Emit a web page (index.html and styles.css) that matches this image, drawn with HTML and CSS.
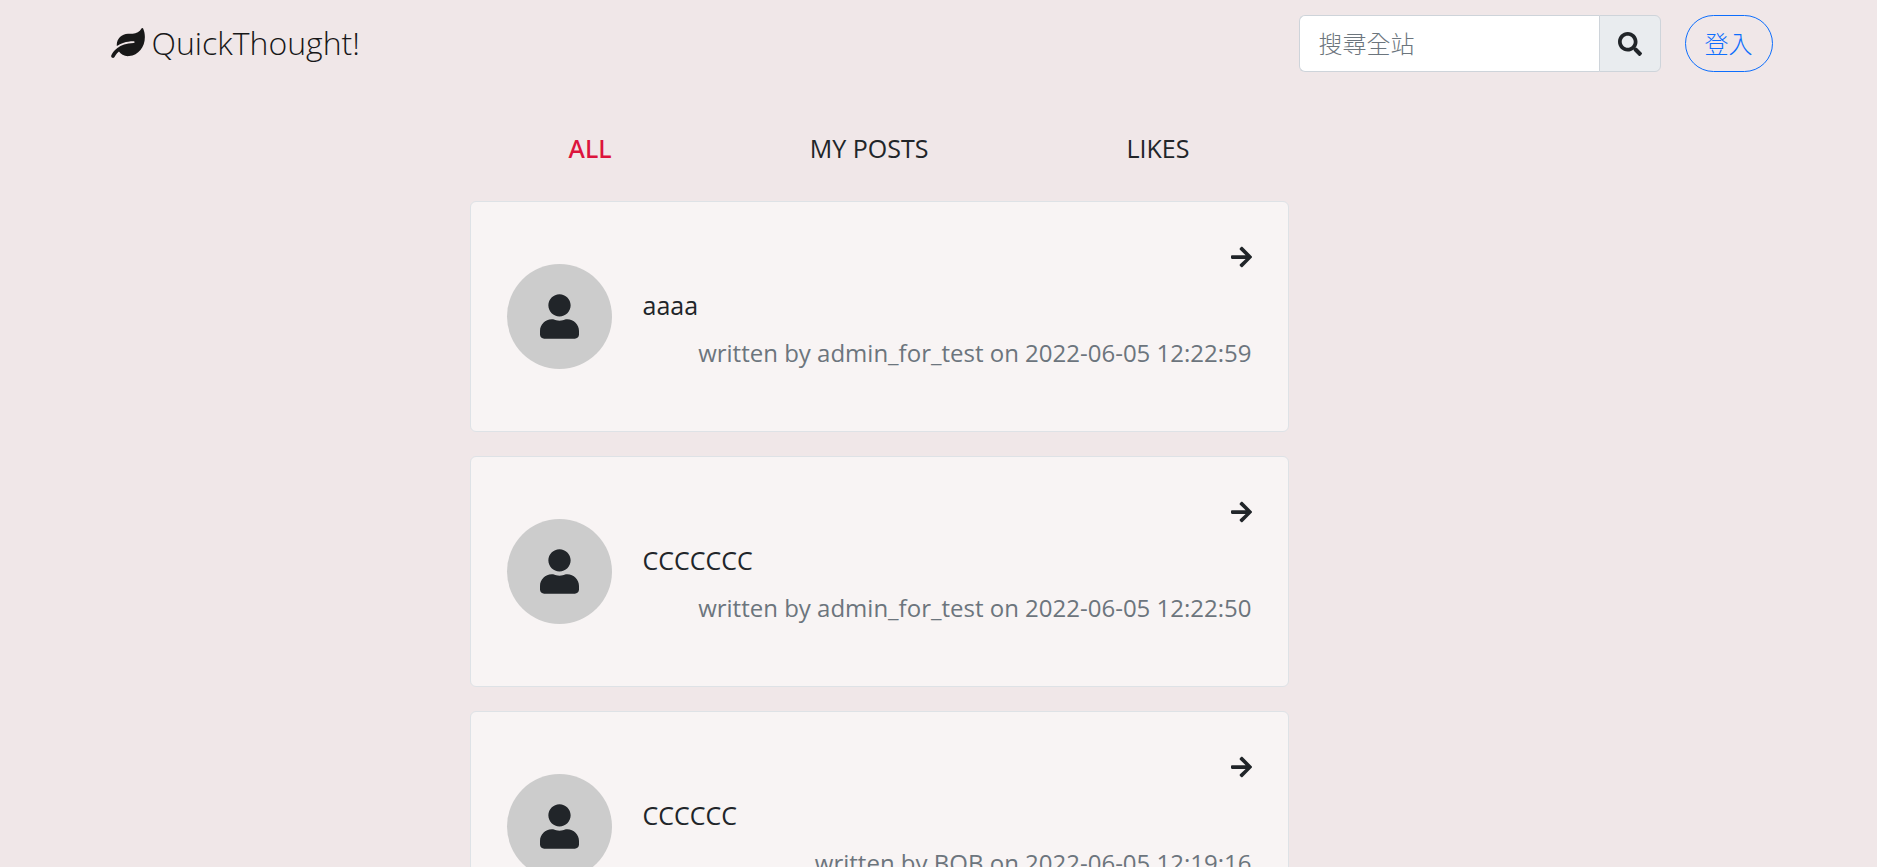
FILE: index.html
```html
<!DOCTYPE html>
<html lang="zh-Hant">
<head>
<meta charset="utf-8">
<meta name="viewport" content="width=device-width, initial-scale=1">
<title>QuickThought!</title>
<link rel="stylesheet" href="styles.css">
</head>
<body>
<svg class="sprite" aria-hidden="true">
  <symbol id="leaf" viewBox="0 0 576 512"><path d="M546.2 9.7c-5.6-12.5-21.6-13-28.3-1.2C486.9 62.4 431.4 96 368 96h-80C182 96 96 182 96 288c0 7 .8 13.7 1.5 20.5C161.3 262.8 253.4 224 384 224c8.8 0 16 7.2 16 16s-7.2 16-16 16C132.6 256 26 410.1 2.4 468c-6.6 16.3 1.2 34.9 17.5 41.6 16.4 6.8 35-1.1 41.8-17.3 1.5-3.6 20.9-47.9 71.9-90.6 32.4 43.9 94 85.8 174.9 77.2C465.5 467.5 576 326.7 576 154.3c0-50.2-10.8-102.2-29.8-144.6z"/></symbol>
  <symbol id="search" viewBox="0 0 512 512"><path d="M505 442.7L405.3 343c-4.5-4.5-10.6-7-17-7H372c27.6-35.3 44-79.7 44-128C416 93.1 322.9 0 208 0S0 93.1 0 208s93.1 208 208 208c48.3 0 92.7-16.4 128-44v16.3c0 6.4 2.5 12.5 7 17l99.7 99.7c9.4 9.4 24.6 9.4 33.9 0l28.3-28.3c9.4-9.4 9.4-24.6.1-34zM208 336c-70.7 0-128-57.2-128-128 0-70.7 57.2-128 128-128 70.7 0 128 57.2 128 128 0 70.7-57.2 128-128 128z"/></symbol>
  <symbol id="user" viewBox="0 0 448 512"><path d="M224 256c70.7 0 128-57.3 128-128S294.7 0 224 0 96 57.3 96 128s57.3 128 128 128zm89.6 32h-16.7c-22.2 10.2-46.9 16-72.9 16s-50.6-5.8-72.9-16h-16.7C60.2 288 0 348.2 0 422.4V464c0 26.5 21.5 48 48 48h352c26.5 0 48-21.5 48-48v-41.6c0-74.2-60.2-134.4-134.4-134.4z"/></symbol>
  <symbol id="arrow" viewBox="0 0 448 512"><path d="M190.5 66.9l22.2-22.2c9.4-9.4 24.6-9.4 33.9 0L441 239c9.4 9.4 9.4 24.6 0 33.9L246.6 467.3c-9.4 9.4-24.6 9.4-33.9 0l-22.2-22.2c-9.5-9.5-9.3-25 .4-34.3L311.4 296H24c-13.3 0-24-10.7-24-24v-32c0-13.3 10.7-24 24-24h287.4L190.9 101.2c-9.8-9.3-10-24.8-.4-34.3z"/></symbol>
</svg>

<header class="navbar">
  <a class="brand" href="#"><svg class="brand-icon" aria-hidden="true"><use href="#leaf"/></svg>QuickThought!</a>
  <div class="nav-actions">
    <form class="search" role="search">
      <input class="search-input" type="search" placeholder="搜尋全站" aria-label="搜尋全站">
      <button class="search-button" type="button" aria-label="搜尋"><svg class="search-icon" aria-hidden="true"><use href="#search"/></svg></button>
    </form>
    <a class="login" href="#">登入</a>
  </div>
</header>

<main class="page">
  <div class="feed">
    <nav class="tabs">
      <a class="tab tab-active" href="#">ALL</a>
      <a class="tab" href="#">MY POSTS</a>
      <a class="tab" href="#">LIKES</a>
    </nav>

    <article class="card">
      <div class="avatar"><svg class="avatar-icon" aria-hidden="true"><use href="#user"/></svg></div>
      <div class="post">
        <a class="open" href="#" aria-label="Open post"><svg class="open-icon" aria-hidden="true"><use href="#arrow"/></svg></a>
        <p class="text">aaaa</p>
        <p class="meta">written by admin_for_test on 2022-06-05 12:22:59</p>
      </div>
    </article>

    <article class="card">
      <div class="avatar"><svg class="avatar-icon" aria-hidden="true"><use href="#user"/></svg></div>
      <div class="post">
        <a class="open" href="#" aria-label="Open post"><svg class="open-icon" aria-hidden="true"><use href="#arrow"/></svg></a>
        <p class="text">CCCCCCC</p>
        <p class="meta">written by admin_for_test on 2022-06-05 12:22:50</p>
      </div>
    </article>

    <article class="card">
      <div class="avatar"><svg class="avatar-icon" aria-hidden="true"><use href="#user"/></svg></div>
      <div class="post">
        <a class="open" href="#" aria-label="Open post"><svg class="open-icon" aria-hidden="true"><use href="#arrow"/></svg></a>
        <p class="text">CCCCCC</p>
        <p class="meta">written by BOB on 2022-06-05 12:19:16</p>
      </div>
    </article>
  </div>
</main>
</body>
</html>
```
FILE: styles.css
```css
* {
  box-sizing: border-box;
}

body {
  margin: 0;
  background: #f0e7e8;
  color: #212529;
  font-family: "Open Sans", "Noto Sans", "Noto Sans CJK TC", sans-serif;
  font-size: 25px;
  line-height: 36px;
}

a {
  color: inherit;
  text-decoration: none;
}

svg {
  display: block;
  fill: currentColor;
}

.sprite {
  position: absolute;
  width: 0;
  height: 0;
}

.navbar {
  display: flex;
  align-items: center;
  justify-content: space-between;
  max-width: 1668px;
  margin: 0 auto;
  padding: 15px 0 15px 6px;
}

.brand {
  display: flex;
  align-items: center;
  gap: 7px;
  padding-bottom: 2px;
  color: #181818;
  font-size: 32px;
  font-weight: 300;
}

.brand-icon {
  width: 34px;
  height: 30px;
}

.nav-actions {
  display: flex;
  gap: 24px;
}

.search {
  display: flex;
}

.search-input {
  width: 300px;
  height: 57px;
  padding: 0 19px 2px;
  border: 1px solid #ced4da;
  border-right: 0;
  border-radius: 6px 0 0 6px;
  background: #fff;
  color: #212529;
  font: 300 24px "Noto Sans CJK TC", sans-serif;
  appearance: none;
}

.search-input::placeholder {
  color: #6c757d;
  opacity: 1;
}

.search-button {
  display: flex;
  align-items: center;
  padding: 0 18px;
  border: 1px solid #ced4da;
  border-radius: 0 6px 6px 0;
  background: #e9ecef;
  color: #212529;
}

.search-icon {
  width: 24px;
  height: 24px;
}

.login {
  display: flex;
  align-items: center;
  padding: 0 19px 2px;
  border: 1px solid #0d6efd;
  border-radius: 30px;
  color: #0d6efd;
  font-family: "Noto Sans CJK TC", sans-serif;
  font-size: 24px;
  font-weight: 300;
}

.page {
  display: grid;
  grid-template-columns: 368fr 819fr 487fr;
  max-width: 1674px;
  margin: 0 auto;
}

.feed {
  grid-column: 2;
}

.tabs {
  display: flex;
  justify-content: space-around;
  padding: 43px 0 35px;
}

.tab-active {
  color: #dc143c;
  font-family: "Noto Sans", sans-serif;
  font-weight: 500;
}

.card {
  display: flex;
  align-items: center;
  gap: 31px;
  margin-bottom: 24px;
  padding: 36px;
  border: 1px solid #dee2e6;
  border-radius: 6px;
  background: #f8f4f4;
}

.avatar {
  display: flex;
  flex: none;
  align-items: center;
  justify-content: center;
  width: 105px;
  height: 105px;
  border-radius: 50%;
  background: #ccc;
}

.avatar-icon {
  width: 39px;
  height: 45px;
}

.post {
  display: flex;
  flex: 1;
  flex-direction: column;
  gap: 12px;
  padding: 1px 0 24px;
}

.open {
  display: flex;
  align-items: center;
  align-self: flex-end;
  height: 36px;
}

.open-icon {
  width: 21px;
  height: 24px;
}

.text,
.meta {
  margin: 0;
}

.meta {
  color: #6c757d;
  font-size: 24px;
  text-align: right;
}
```
